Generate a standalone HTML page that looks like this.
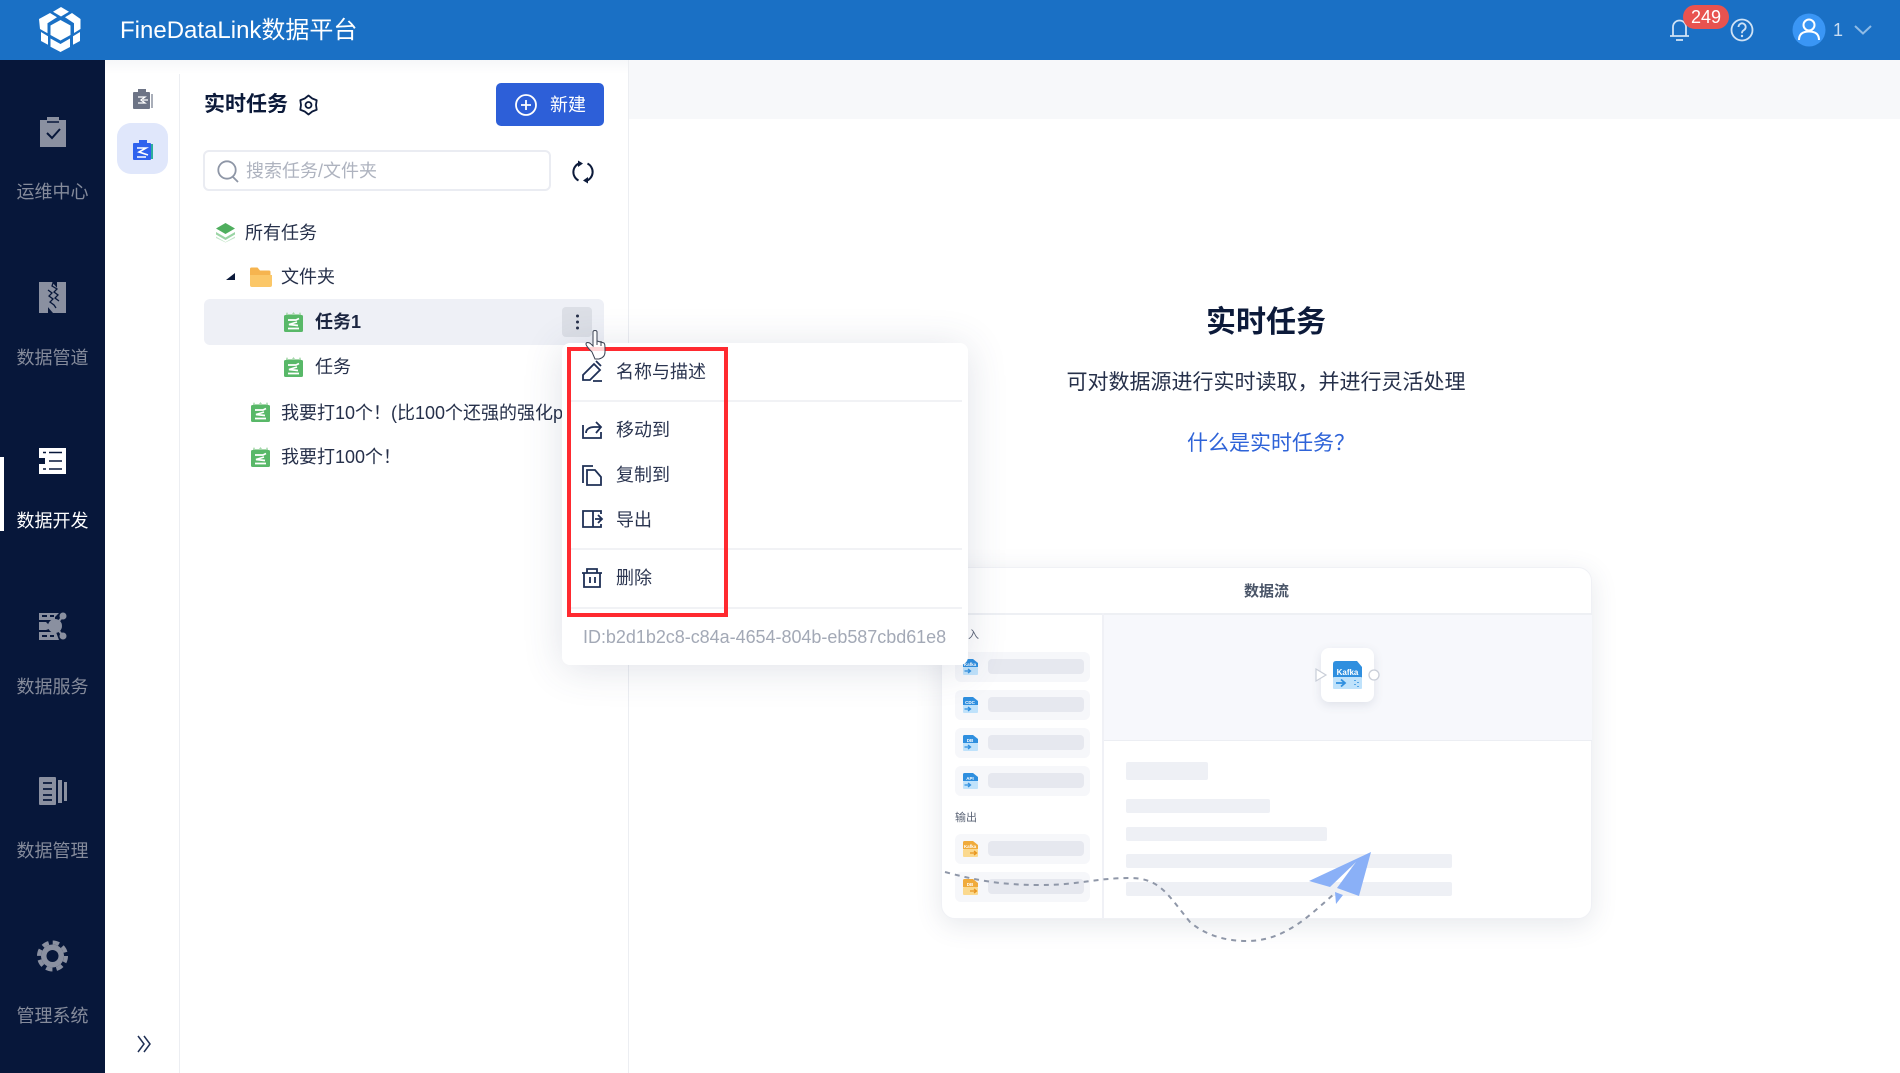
<!DOCTYPE html>
<html lang="zh"><head><meta charset="utf-8"><title>FineDataLink</title>
<style>
*{box-sizing:border-box;margin:0;padding:0}
html,body{width:1900px;height:1073px;overflow:hidden;background:#fff}
body{position:relative;font-family:"Liberation Sans","Noto Sans CJK SC",sans-serif;color:#26304a}
.a{position:absolute}
.t{position:absolute;white-space:nowrap;line-height:30px;height:30px;font-size:18px}
.n{color:#858b9b;width:105px;left:0;text-align:center}
svg{position:absolute;left:0;top:0;overflow:visible}
.item{position:absolute;left:955px;width:135px;height:30px;background:#f6f7fa;border-radius:6px}
.item i{position:absolute;left:33px;top:7px;width:96px;height:15px;background:#e6e8ef;border-radius:4px}
.bar{position:absolute;left:1126px;background:#eef0f5;border-radius:2px}
.div{position:absolute;left:568px;width:394px;height:2px;background:#f1f2f5}
</style></head><body>
<!-- backgrounds -->
<div class="a" style="left:629px;top:60px;width:1271px;height:59px;background:#f7f8fa"></div>
<div class="a" style="left:0;top:60px;width:105px;height:1013px;background:#07173a"></div>
<div class="a" style="left:105px;top:60px;width:524px;height:1013px;background:#fff"></div>
<div class="a" style="left:179px;top:60px;width:1px;height:1013px;background:#eceef2"></div>
<div class="a" style="left:628px;top:60px;width:1px;height:1013px;background:#eceef2"></div>
<div class="a" style="left:105px;top:60px;width:523px;height:14px;background:linear-gradient(#f6f7f9,#fff)"></div>
<div class="a" style="left:0;top:457px;width:4px;height:74px;background:#fff"></div>
<div class="a" style="left:0;top:0;width:1900px;height:60px;background:#1a70c5"></div>
<div class="a" style="left:117px;top:123px;width:51px;height:51px;background:#e0e7fb;border-radius:14px"></div>

<!-- header -->
<div class="t" style="left:120px;top:16px;font-size:24px;color:#fff;letter-spacing:0">FineDataLink数据平台</div>
<div class="a" style="left:1683px;top:5px;width:46px;height:24px;background:#e8534f;border-radius:12px;color:#fff;font-size:18px;line-height:24px;text-align:center;z-index:2">249</div>
<div class="t" style="left:1833px;top:15px;color:#c7dcf2;font-size:18px">1</div>

<!-- sidebar labels -->
<div class="t n" style="top:177px">运维中心</div>
<div class="t n" style="top:343px">数据管道</div>
<div class="t n" style="top:506px;color:#fff">数据开发</div>
<div class="t n" style="top:672px">数据服务</div>
<div class="t n" style="top:836px">数据管理</div>
<div class="t n" style="top:1001px">管理系统</div>

<!-- panel -->
<div class="t" style="left:204px;top:90px;font-size:21px;font-weight:700;color:#0c1a3a">实时任务</div>
<div class="a" style="left:496px;top:83px;width:108px;height:43px;background:#2d5fd8;border-radius:5px"></div>
<div class="t" style="left:550px;top:90px;color:#fff">新建</div>
<div class="a" style="left:203px;top:150px;width:348px;height:41px;border:2px solid #eaecf2;border-radius:6px;background:#fff"></div>
<div class="t" style="left:246px;top:156px;color:#aeb3bf">搜索任务/文件夹</div>
<div class="t" style="left:245px;top:218px">所有任务</div>
<div class="t" style="left:281px;top:262px">文件夹</div>
<div class="a" style="left:204px;top:299px;width:400px;height:46px;background:#eef0f6;border-radius:6px"></div>
<div class="a" style="left:562px;top:307px;width:30px;height:30px;background:#dcdfe6;border-radius:4px"></div>
<div class="t" style="left:315px;top:307px;font-weight:700;color:#1b2540">任务1</div>
<div class="t" style="left:315px;top:352px">任务</div>
<div class="t" style="left:281px;top:398px;width:282px;overflow:hidden">我要打10个！(比100个还强的强化p</div>
<div class="t" style="left:281px;top:442px">我要打100个！</div>

<!-- main -->
<div class="t" style="left:1066px;width:400px;text-align:center;top:308px;font-size:30px;font-weight:700;color:#0c1a3a">实时任务</div>
<div class="t" style="left:1016px;width:500px;text-align:center;top:368px;font-size:21px;color:#26304a">可对数据源进行实时读取，并进行灵活处理</div>
<div class="t" style="left:1187px;top:429px;font-size:21px;color:#2e63d8">什么是实时任务？</div>

<!-- illustration card -->
<div class="a" style="left:941px;top:567px;width:651px;height:352px;background:#fff;border-radius:14px;box-shadow:0 6px 26px rgba(60,75,110,.13);border:1px solid #f0f1f5"></div>
<div class="a" style="left:1103px;top:614px;width:489px;height:127px;background:#f7f8fc;border-bottom:1px solid #eceef3"></div>
<div class="a" style="left:941px;top:613px;width:651px;height:2px;background:#eef0f4"></div>
<div class="a" style="left:1102px;top:613px;width:2px;height:305px;background:#f0f1f6"></div>
<div class="t" style="left:1244px;top:577px;font-size:15px;font-weight:700;color:#4a5568">数据流</div>
<div class="t" style="left:968px;top:620px;font-size:11px;color:#5a6375">入</div>
<div class="t" style="left:955px;top:803px;font-size:11px;color:#5a6375">输出</div>
<div class="item" style="top:652px"><i></i></div>
<div class="item" style="top:690px"><i></i></div>
<div class="item" style="top:728px"><i></i></div>
<div class="item" style="top:766px"><i></i></div>
<div class="item" style="top:834px"><i></i></div>
<div class="item" style="top:872px"><i></i></div>
<div class="bar" style="top:762px;width:82px;height:18px"></div>
<div class="bar" style="top:799px;width:144px;height:14px"></div>
<div class="bar" style="top:827px;width:201px;height:14px"></div>
<div class="bar" style="top:854px;width:326px;height:14px"></div>
<div class="bar" style="top:882px;width:326px;height:14px"></div>
<div class="a" style="left:1321px;top:648px;width:53px;height:54px;background:#fff;border-radius:8px;box-shadow:0 3px 10px rgba(60,75,110,.13)"></div>

<svg width="1900" height="1073" viewBox="0 0 1900 1073">
<defs>
<symbol id="task" viewBox="0 0 19 20">
<path d="M2 2l1-2 1 2 4 0 1.500-2 1.500 2 4 0 1-2 1 2v3H2z" fill="#a6d8ac"/>
<rect x="0" y="3" width="19" height="17" rx="1.500" fill="#58b868"/>
<path d="M4 8h8l3-1.500M13 10l-8 2.500 9 1M4 16.500h11" fill="none" stroke="#fff" stroke-width="1.700"/>
</symbol>
<symbol id="bf" viewBox="0 0 15 16">
<path d="M0 1.500Q0 0 1.500 0H10l5 4v4H0z" fill="#2f8fdf"/><rect y="8" width="15" height="8" rx="1" fill="#bfe2fb"/>
<path d="M1.500 12h6M5 10l2.500 2-2.500 2" stroke="#2f8fdf" stroke-width="1.300" fill="none"/>
</symbol>
<symbol id="of" viewBox="0 0 15 16">
<path d="M0 1.500Q0 0 1.500 0H10l5 4v4H0z" fill="#f0ab3c"/><rect y="8" width="15" height="8" rx="1" fill="#fbd98e"/>
<path d="M7 12h6.500M11 10l2.500 2-2.500 2" stroke="#e8951e" stroke-width="1.300" fill="none"/>
</symbol>
</defs>

<!-- logo -->
<g fill="#fff">
<path d="M61 7l8 4.700-8 4.800-8-4.800z"/>
<path d="M39 19l11-6 7 4.300-9.500 6v10L40 29z"/>
<path d="M72 13l8.500 6v10l-6.500 4V23.300l-9-6z"/>
<path d="M60.500 20l10 5.500v9.500l-10 5.500-10-5.500v-9.500z"/>
<path d="M41 32l7 4.200v8.500L41 41z"/>
<path d="M80 32l-7 4.200v8.500L80 41z"/>
<path d="M50.500 38.500l10 5.500 9.500-5.500v8.500L60.500 52l-10-5.300z"/>
</g>
<!-- header right -->
<g fill="none" stroke="#cfe2f5" stroke-width="1.800">
<path d="M1670 36h19M1673 36v-9a6.500 6.500 0 0 1 13 0v9"/><path d="M1676 40h7"/>
<circle cx="1742" cy="30" r="10.500"/>
<path d="M1738.500 27a3.600 3.600 0 1 1 5.500 3c-1.500 1-2 1.500-2 3.200"/>
</g>
<circle cx="1742" cy="36" r="1.200" fill="#cfe2f5"/>
<circle cx="1809" cy="30" r="16.500" fill="#3a96f5"/>
<g fill="none" stroke="#fff" stroke-width="2"><circle cx="1809" cy="25" r="5.500"/><path d="M1799 40c0-6 4-8.500 10-8.500s10 2.500 10 8.500"/></g>
<path d="M1855 26l8 7.500 8-7.500" fill="none" stroke="#8fbbe6" stroke-width="2"/>

<!-- sidebar icons -->
<g fill="#8a90a0">
<path d="M40 120h7v-3h12v3h7v27H40z"/>
<path d="M47 122h12" stroke="#07173a" stroke-width="1.500"/>
<path d="M47 133l5 5 8-9" fill="none" stroke="#07173a" stroke-width="2"/>
<!-- pipe -->
<rect x="39" y="282" width="9" height="31"/><rect x="57" y="282" width="9" height="31"/>
<path d="M47 282h5l6 7v24h-5l-6-7z"/>
<path d="M48 290l4 3-3 3 4 3-3 3 4 3 2 3M53 283l-1 3 5 3-3 3 4 3-3 3 4 3" fill="none" stroke="#07173a" stroke-width="1.300"/>
<!-- service -->
<path d="M39 613h20l-4 4v3H39zM39 632h17l3 8H39zM39 622h7l3 3v4l-3 1h-7z"/>
<circle cx="55" cy="626" r="7"/><circle cx="63" cy="616" r="3.500"/><circle cx="63" cy="636" r="3.500"/>
<path d="M55 626l8-10M55 626l8 10" stroke="#8a90a0" stroke-width="2"/>
<path d="M42 616h5M50 616h4M42 636h5M50 636h4" stroke="#07173a" stroke-width="2"/>
<!-- manage -->
<rect x="39" y="777" width="17" height="28" rx="1"/><rect x="58" y="780" width="4" height="23"/><rect x="64" y="782" width="3" height="19"/>
<path d="M43 783h9M43 789h9M43 795h9M43 800h9" stroke="#07173a" stroke-width="1.800"/>
<!-- gear -->
<circle cx="52.500" cy="956" r="11.500"/>
</g>
<circle cx="52.500" cy="956" r="13.500" fill="none" stroke="#8a90a0" stroke-width="4" stroke-dasharray="6.500 4.100"/>
<circle cx="52.500" cy="956" r="6" fill="#07173a"/>
<!-- dev active -->
<rect x="39" y="448" width="27" height="26" fill="#fff"/>
<rect x="39" y="458" width="6" height="6" fill="#07173a"/>
<path d="M43 452.500h3M49 452.500h13M43 469h3M49 469h13M49 461h13" stroke="#07173a" stroke-width="1.500"/>

<!-- col2 icons -->
<path d="M133 92h5v-3h8v3h3q1 0 1 1v15q0 1-1 1h-15q-1 0-1-1V93q0-1 1-1z" fill="#6d7486"/><rect x="151" y="94" width="2" height="14" fill="#a9aeb9"/>
<path d="M138 97h7l-4 3 4 3h-7M143 100h5" fill="none" stroke="#fff" stroke-width="1.300"/>
<rect x="150" y="144" width="3" height="15" fill="#2dae9b"/>
<path d="M134 143h5v-3h8v3h3q1 0 1 1v15q0 1-1 1h-16q-1 0-1-1v-15q0-1 1-1z" fill="#2f62ee"/>
<path d="M137 148h9l-7 4 9 3M137 157h9" fill="none" stroke="#fff" stroke-width="1.600"/>

<!-- panel icons -->
<g fill="none" stroke="#0c1a3a" stroke-width="1.800" stroke-linejoin="round">
<path d="M308.500 95.500L312.250 98.500 316.700 100.250 316 105 316.700 109.750 312.250 111.500 308.500 114.500 304.750 111.500 300.300 109.750 301 105 300.300 100.250 304.750 98.500z"/><circle cx="308.500" cy="105" r="3"/>
</g>
<circle cx="526" cy="105" r="10" fill="none" stroke="#fff" stroke-width="1.800"/>
<path d="M526 100v10M521 105h10" stroke="#fff" stroke-width="1.800"/>
<circle cx="227" cy="170" r="8.700" fill="none" stroke="#8e96a6" stroke-width="1.800"/>
<path d="M233 177l5 5" stroke="#8e96a6" stroke-width="1.800"/>
<path d="M580 163a9.500 9.500 0 0 0-1.500 17.500M586 181a9.500 9.500 0 0 0 1.500-17.500" fill="none" stroke="#0c1a3a" stroke-width="2"/>
<path d="M578 160.500l5 3-5 3.500zM588 183.500l-5-3 5-3.500z" fill="#0c1a3a"/>
<path d="M225.500 223l9.500 5.500-9.500 5.500-9.500-5.500z" fill="#4fae5e"/>
<path d="M216 232l9.500 5.500 9.500-5.500v2.500l-9.500 5.500-9.500-5.500z" fill="#9ad4a4"/>
<path d="M216 236.500l9.500 5.500 9.500-5.500v1.500l-9.500 4.500-9.500-4.500z" fill="#c4e6ca"/>
<path d="M235 273v7h-9z" fill="#0c1a3a"/>
<path d="M250 269q0-1.500 1.500-1.500h6l2.500 3h9q1.500 0 1.500 1.500v3H250z" fill="#f6b44f"/>
<path d="M250 275h22v10q0 2-2 2h-18q-2 0-2-2z" fill="#fbc768"/>
<use href="#task" x="284" y="312" width="19" height="20"/>
<use href="#task" x="284" y="357" width="19" height="20"/>
<use href="#task" x="251" y="402" width="19" height="20"/>
<use href="#task" x="251" y="447" width="19" height="20"/>
<circle cx="577.500" cy="316" r="1.500" fill="#26304a"/><circle cx="577.500" cy="322" r="1.500" fill="#26304a"/><circle cx="577.500" cy="328" r="1.500" fill="#26304a"/>
<!-- collapse -->
<path d="M138 1036l6 8-6 8M144 1036l6 8-6 8" fill="none" stroke="#1f2f54" stroke-width="1.500"/>

<!-- illustration icons -->
<use href="#bf" x="963" y="659" width="15" height="16"/>
<use href="#bf" x="963" y="697" width="15" height="16"/>
<use href="#bf" x="963" y="735" width="15" height="16"/>
<use href="#bf" x="963" y="773" width="15" height="16"/>
<use href="#of" x="963" y="841" width="15" height="16"/>
<use href="#of" x="963" y="879" width="15" height="16"/>
<g font-size="4.500" font-weight="700" fill="#fff" text-anchor="middle" font-family="Liberation Sans,sans-serif">
<text x="970" y="666">Kafka</text><text x="970" y="704">CDC</text><text x="970" y="742">DB</text><text x="970" y="780">API</text><text x="970" y="848">Kafka</text><text x="970" y="886">DB</text>
</g>
<!-- node -->
<path d="M1333 664q0-3 3-3h21l5 6v11h-29z" fill="#2f8fdf"/>
<rect x="1333" y="677" width="29" height="12" rx="1" fill="#bfe2fb"/>
<text x="1347.500" y="675" font-size="8" font-weight="700" fill="#fff" text-anchor="middle" font-family="Liberation Sans,sans-serif">Kafka</text>
<path d="M1336 683h9M1341 679.500l4 3.500-4 3.500" stroke="#2f8fdf" stroke-width="1.800" fill="none"/>
<path d="M1355 680v1M1358 682v1M1355 684v1M1358 686v1" stroke="#2f8fdf" stroke-width="1.500"/>
<path d="M1316 669l10 6-10 6z" fill="#fff" stroke="#c9ced8" stroke-width="1.200"/>
<circle cx="1374" cy="675" r="5" fill="#fff" stroke="#c9ced8" stroke-width="1.300"/>
<!-- dashed & plane -->
<path d="M945 872C975 880 1000 885 1040 885S1095 878 1130 878C1160 878 1168 895 1190 922C1205 935 1225 941 1247 941C1285 941 1310 915 1334 894" fill="none" stroke="#8f97a8" stroke-width="2" stroke-dasharray="5 5"/>
<path d="M1371 852L1309 881l21 6 26-25-19 26 22 8z" fill="#8ab0f7"/>
<path d="M1335 892l8 3-7 9z" fill="#8ab0f7"/>
</svg>

<!-- context menu -->
<div class="a" style="left:562px;top:343px;width:406px;height:322px;background:#fff;border-radius:8px;box-shadow:0 4px 40px rgba(60,75,110,.16)"></div>
<div class="div" style="top:400px"></div>
<div class="div" style="top:548px"></div>
<div class="div" style="top:607px"></div>
<div class="t" style="left:616px;top:357px;color:#2b3550">名称与描述</div>
<div class="t" style="left:616px;top:415px;color:#2b3550">移动到</div>
<div class="t" style="left:616px;top:460px;color:#2b3550">复制到</div>
<div class="t" style="left:616px;top:505px;color:#2b3550">导出</div>
<div class="t" style="left:616px;top:563px;color:#2b3550">删除</div>
<div class="t" style="left:583px;top:622px;color:#a3a9b6;letter-spacing:-.03px">ID:b2d1b2c8-c84a-4654-804b-eb587cbd61e8</div>
<div class="a" style="left:567px;top:347px;width:161px;height:270px;border:4px solid #ff2a30"></div>
<svg width="1900" height="1073" viewBox="0 0 1900 1073">
<g fill="none" stroke="#1f3056" stroke-width="1.800">
<path d="M583 380v-5l11-11 6 6-10 10zM596 361l5 5M593 381h9"/>
<path d="M583 425v13h18v-6M586 433c0-4 4-6 8-6h7M596 422l5 5-5 6"/>
<path d="M583 483v-17h10M587 470h8l6 7v8h-14z"/>
<path d="M593 511h-10v16h10zM593 511h8v3M593 527h8v-3M595 519h7M598 515l4 4-4 4"/>
<path d="M582 573h20M587 573v-4h10v4M584 573v14h16v-14M590 577v6M595 577v6"/>
</g>
<!-- cursor -->
<path d="M592 352c-3-3-6-6-6-8s3-2 5 0l2 2v-14c0-2 4-2 4 0v9l7 2c1 1 1 3 1 9 0 4-2 6-6 7h-4z" fill="#fff" fill-opacity=".8" stroke="#3b4252" stroke-width="1"/>
<path d="M597 340v5M601 341v5" stroke="#3b4252" stroke-width="1"/>
</svg>
</body></html>
